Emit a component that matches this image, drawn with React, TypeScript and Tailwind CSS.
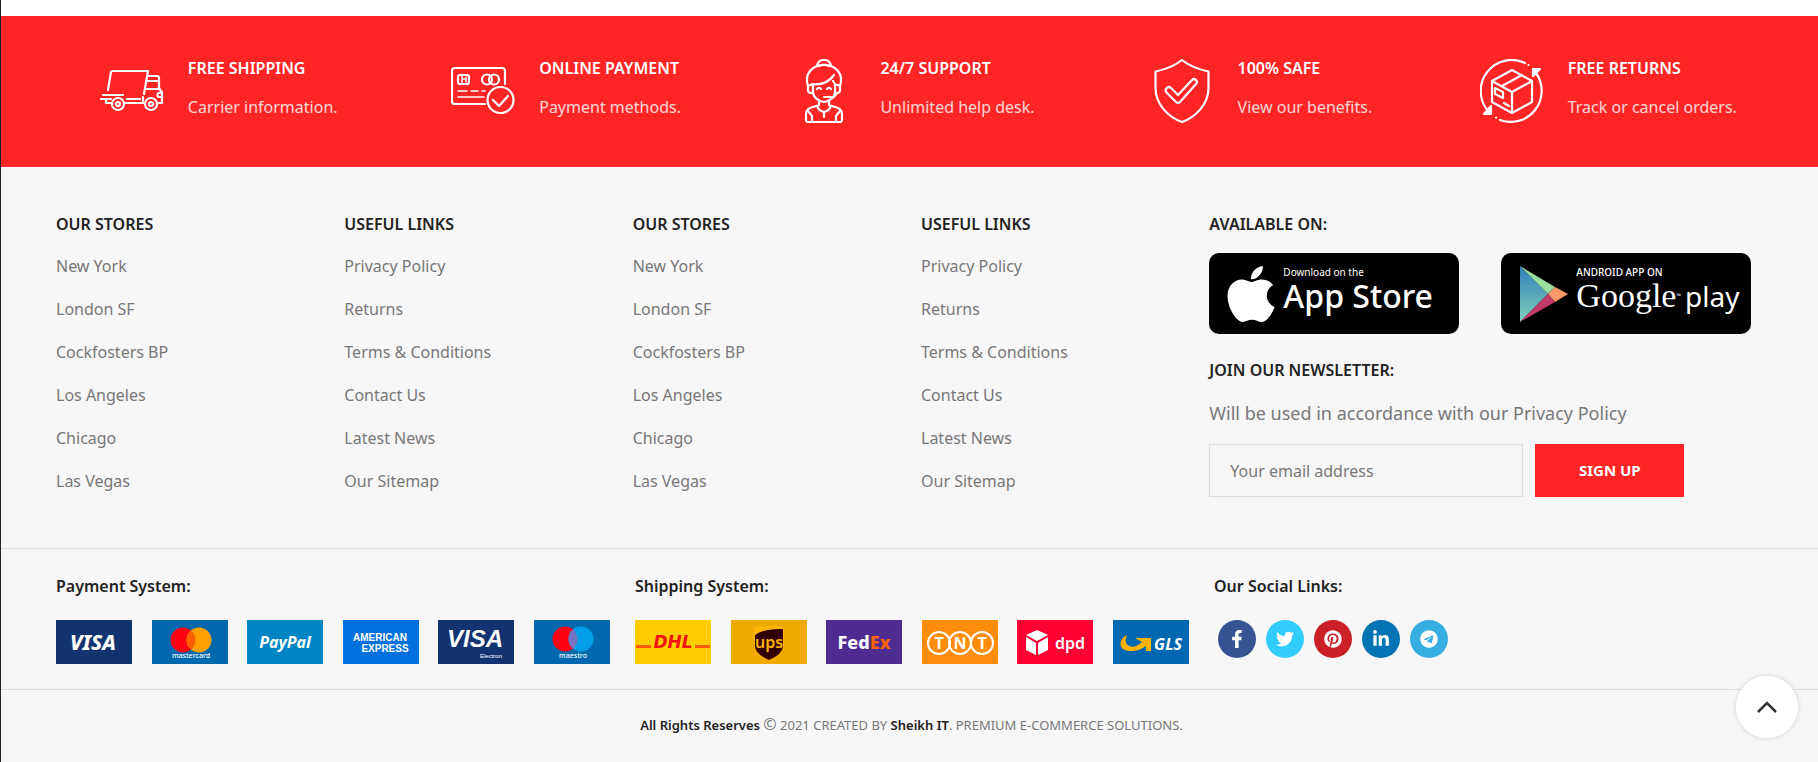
import React from 'react'
import { FaApple, FaFacebookF, FaTwitter, FaPinterest, FaLinkedinIn, FaTelegram } from 'react-icons/fa'

const strokeProps = {
  fill: 'none',
  stroke: 'currentColor',
  strokeWidth: 2.2,
  strokeLinecap: 'round' as const,
  strokeLinejoin: 'round' as const,
}

const TruckIcon = () => (
  <svg viewBox="0 0 64 64" className="size-16 shrink-0" {...strokeProps}>
    <path d="M8 31 11 13q.4-1 1.500-1H48L44 35M43 38v4M3 36h20M1 40h10M6 41v3h6M27 40h13" />
    <path d="M47 17h10q2 0 2 2v11l3 3v11h-3M47 22h12M47 30h13M62 34h-3q-1.500 0-1.500 2t1.500 2h3M24 44h20" />
    <circle cx="18" cy="45" r="6" />
    <circle cx="18" cy="45" r="2" />
    <circle cx="51" cy="45" r="6" />
    <circle cx="51" cy="45" r="2" />
  </svg>
)

const CardIcon = () => (
  <svg viewBox="0 0 64 64" className="size-16 shrink-0" {...strokeProps}>
    <path d="M34 45H4q-3 0-3-3V12q0-3 3-3h47q3 0 3 3v13" />
    <rect x="7" y="16" width="11" height="9" rx="2" />
    <path d="M11 16v9M11 20h4M15 18v5M7 32h9M20 32h7M31 32h3M7 38h26" strokeWidth="1.500" />
    <circle cx="36" cy="20.500" r="5" />
    <circle cx="43" cy="20.500" r="5" />
    <circle cx="49.500" cy="41" r="13" />
    <path d="m42 41 6 6 9-10" />
  </svg>
)

const SupportIcon = () => (
  <svg viewBox="0 0 64 64" className="size-16 shrink-0" {...strokeProps}>
    <path d="M25 7q1-6 7-6t7 6M27 7q5-3 10 0" />
    <path d="M16 27C12 15 20 6 32 6s20 9 16 21" />
    <path d="M20 25q14 2 22-9M21 26v7c0 5 6 10 11 10s11-5 11-10v-8l-2-3" />
    <path d="M20 26h-2q-2 0-2 3v2q0 3 3 3h2M44 26h2q2 0 2 3v2q0 3-3 3l-3 4H32" />
    <path d="M25 30q2-2.500 4 0M35 30q2-2.500 4 0" />
    <path d="M27 41v5l-9 3q-4 2-4 6v6q0 2 2 2h32q2 0 2-2v-6q0-4-4-6l-9-3v-5M25 47q2 5 7 6 5-1 7-6M32 53v5M20 63v-6l-4-5M44 63v-6l4-5" />
  </svg>
)

const ShieldIcon = () => (
  <svg viewBox="0 0 64 64" className="size-16 shrink-0" {...strokeProps}>
    <path d="M32 1q10 8 26.500 11.500V29C58.500 45 46 58 32 63 18 58 5.500 45 5.500 29V12.500Q22 9 32 1Z" />
    <path d="M17 34q-3-3 0-5 2-2 4 0l7 7 14-15q2-2 4 0t0 4L30 43q-2 2-4 0Z" />
  </svg>
)

const ReturnIcon = () => (
  <svg viewBox="0 0 64 64" className="size-16 shrink-0" {...strokeProps}>
    <path d="M45 4A31 31 0 0 0 8 52M20 61A31 31 0 0 0 56 14" />
    <path d="M53 10h7l-7 7ZM11 47v8H4Z" fill="currentColor" />
    <path d="M48.500 6h.1M16 58.500h.1" />
    <path d="m32 11 20 11v21L32 54 12 43V22ZM12 22l20 11 20-11M32 33v21M22 27l20-11" />
    <path d="m15 29 8 4v6l-8-4ZM24 44l5 3" />
  </svg>
)

const features = [
  { title: 'FREE SHIPPING', text: 'Carrier information.', icon: <TruckIcon /> },
  { title: 'ONLINE PAYMENT', text: 'Payment methods.', icon: <CardIcon /> },
  { title: '24/7 SUPPORT', text: 'Unlimited help desk.', icon: <SupportIcon /> },
  { title: '100% SAFE', text: 'View our benefits.', icon: <ShieldIcon /> },
  { title: 'FREE RETURNS', text: 'Track or cancel orders.', icon: <ReturnIcon /> },
]

const stores = {
  title: 'OUR STORES',
  links: ['New York', 'London SF', 'Cockfosters BP', 'Los Angeles', 'Chicago', 'Las Vegas'],
}
const useful = {
  title: 'USEFUL LINKS',
  links: ['Privacy Policy', 'Returns', 'Terms & Conditions', 'Contact Us', 'Latest News', 'Our Sitemap'],
}
const columns = [stores, useful, stores, useful]

const Logo = ({ label, bg, children }: { label: string; bg: string; children: React.ReactNode }) => (
  <li>
    <svg
      viewBox="0 0 76 44"
      role="img"
      aria-label={label}
      className="h-11 w-19"
      fontFamily="'Noto Sans', sans-serif"
      fontWeight="700"
      fill="#fff"
      textAnchor="middle"
    >
      <rect width="76" height="44" fill={bg} />
      {children}
    </svg>
  </li>
)

const PaymentLogos = () => (
  <ul className="flex max-w-[554px] justify-between">
    <Logo label="Visa" bg="#12336f">
      <text x="37" y="30" fontSize="21" fontStyle="italic" fontWeight="800">VISA</text>
    </Logo>
    <Logo label="Mastercard" bg="#0069ad">
      <circle cx="31" cy="20" r="12.500" fill="#ff0015" />
      <circle cx="47" cy="20" r="12.500" fill="#ff9f00" />
      <path d="M39 10.400a12.500 12.500 0 0 1 0 19.200 12.500 12.500 0 0 1 0-19.200Z" fill="#ff5f00" />
      <text x="39" y="38" fontSize="7" fontWeight="500">mastercard</text>
    </Logo>
    <Logo label="PayPal" bg="#0085c3">
      <text x="38" y="28" fontSize="16" fontStyle="italic">PayPal</text>
    </Logo>
    <Logo label="American Express" bg="#0071dc">
      <text x="37" y="21" fontSize="10" fontFamily="'Liberation Sans', sans-serif">AMERICAN</text>
      <text x="42" y="32" fontSize="10" fontFamily="'Liberation Sans', sans-serif">EXPRESS</text>
    </Logo>
    <Logo label="Visa Electron" bg="#12336f">
      <text x="37" y="27" fontSize="24" fontStyle="italic" fontFamily="'Liberation Sans', sans-serif">VISA</text>
      <text x="53" y="38" fontSize="6" fontWeight="400" fontFamily="'Liberation Sans', sans-serif">Electron</text>
    </Logo>
    <Logo label="Maestro" bg="#0069ad">
      <circle cx="31" cy="19" r="12.500" fill="#ff0015" />
      <circle cx="47" cy="19" r="12.500" fill="#009ee8" />
      <path d="M39 9.400a12.500 12.500 0 0 1 0 19.200 12.500 12.500 0 0 1 0-19.200Z" fill="#7673c0" />
      <text x="39" y="38" fontSize="7" fontWeight="500">maestro</text>
    </Logo>
  </ul>
)

const ShippingLogos = () => (
  <ul className="flex max-w-[554px] justify-between">
    <Logo label="DHL" bg="#ffcc00">
      <path d="M1 25h15v3H1ZM60 25h15v3H60Z" fill="#ff5a00" />
      <text x="38" y="28" fontSize="17" fontStyle="italic" fontFamily="'DejaVu Sans', sans-serif" fill="#f01414">DHL</text>
    </Logo>
    <Logo label="UPS" bg="#eeaa00">
      <path d="M23 8q14-5 30 0v18q0 9-15 15-15-6-15-15Z" fill="#ffb500" />
      <path d="M24 15q10-7 28-6v17q0 8-14 14-14-6-14-14Z" fill="#330000" />
      <text x="38" y="28" fontSize="16" fontWeight="600" fill="#ffb500">ups</text>
    </Logo>
    <Logo label="FedEx" bg="#4d2b91">
      <text x="38" y="29" fontSize="18" fontWeight="800">Fed<tspan fill="#ff6200">Ex</tspan></text>
    </Logo>
    <Logo label="TNT" bg="#ff8c0a">
      <g fill="none" stroke="#fff" strokeWidth="2">
        <circle cx="17" cy="23" r="11" />
        <circle cx="38" cy="23" r="11" />
        <circle cx="60" cy="23" r="11" />
      </g>
      <text x="17" y="29" fontSize="16">T</text>
      <text x="38" y="29" fontSize="16">N</text>
      <text x="60" y="29" fontSize="16">T</text>
    </Logo>
    <Logo label="DPD" bg="#ff0032">
      <path d="m20 10 11 5-11 6-11-6ZM9 17l10 6v12L9 30ZM31 17l-10 6v12l10-5Z" />
      <text x="53" y="29" fontSize="16" fontWeight="600">dpd</text>
    </Logo>
    <Logo label="GLS" bg="#0067b1">
      <path d="M14 15C5 19 5 31 17 31c7 0 12-2 16-5v5h5V18H22l7 4c-4 4-9 6-13 4s-4-7-2-11Z" fill="#ffb400" />
      <text x="55" y="30" fontSize="16" fontStyle="italic">GLS</text>
    </Logo>
  </ul>
)

const socials = [
  { name: 'Facebook', Icon: FaFacebookF, color: 'bg-[#365493]' },
  { name: 'Twitter', Icon: FaTwitter, color: 'bg-[#33ccff]' },
  { name: 'Pinterest', Icon: FaPinterest, color: 'bg-[#cb2027]' },
  { name: 'LinkedIn', Icon: FaLinkedinIn, color: 'bg-[#0274b3]' },
  { name: 'Telegram', Icon: FaTelegram, color: 'bg-[#37aee2]' },
]

export default function App() {
  return (
    <div className="min-h-screen border-l border-[#222] bg-[#f7f7f7] pt-4 font-['Noto_Sans',sans-serif] text-base text-[#777] shadow-[inset_0_16px_#fff]">
      <section className="grid grid-cols-5 border-b border-[#f33] bg-[#ff2525] pt-10 pr-9 pb-[43px] pl-11 text-white">
        {features.map((f) => (
          <div key={f.title} className="flex items-end justify-center gap-6">
            {f.icon}
            <div className="space-y-[15px] pb-1">
              <h3 className="leading-6 font-semibold">{f.title}</h3>
              <p className="leading-6 text-white/80">{f.text}</p>
            </div>
          </div>
        ))}
      </section>

      <footer>
        <div className="grid grid-cols-6 pt-[45px] pr-8 pb-[51px] pl-[55px]">
          {columns.map((col, i) => (
            <nav key={i} aria-label={col.title}>
              <h4 className="mb-[18px] leading-6 font-semibold text-[#222]">{col.title}</h4>
              <ul className="space-y-[19px]">
                {col.links.map((link) => (
                  <li key={link} className="leading-6">
                    <a href="#">{link}</a>
                  </li>
                ))}
              </ul>
            </nav>
          ))}

          <div className="col-span-2">
            <h4 className="mb-[17px] leading-6 font-semibold text-[#222]">AVAILABLE ON:</h4>
            <div className="flex gap-[42px]">
              <a href="#" className="flex h-[81px] w-[250px] items-center gap-2 rounded-[10px] bg-black pl-[18px] text-white">
                <FaApple className="h-16 w-12 shrink-0" />
                <span className="block pb-2">
                  <span className="block text-[10px] leading-3">Download on the</span>
                  <span className="block text-[32px] leading-9 font-medium whitespace-nowrap">App Store</span>
                </span>
              </a>
              <a href="#" className="flex h-[81px] w-[250px] items-center gap-2 rounded-[10px] bg-black pl-[19px] text-white">
                <svg viewBox="0 0 48 56" className="h-14 w-12 shrink-0">
                  <defs>
                    <linearGradient id="play" x2="0" y2="1">
                      <stop stopColor="#2f7fb8" />
                      <stop offset="1" stopColor="#7fd0bd" />
                    </linearGradient>
                  </defs>
                  <path d="M0 0v56l28-28Z" fill="url(#play)" />
                  <path d="m0 0 35 21-7 7Z" fill="#9bdca0" />
                  <path d="m35 21 13 7-13 8-7-8Z" fill="#fb9a68" />
                  <path d="m0 56 35-20-7-8Z" fill="#c23a68" />
                </svg>
                <span className="block pb-2">
                  <span className="block text-[10px] leading-3 font-medium">ANDROID APP ON</span>
                  <span className="flex items-baseline text-[28px] leading-9">
                    <span className="font-['Liberation_Serif',serif] text-[34px]">Google</span>
                    <span className="self-center text-[6px] leading-3">™</span>
                    <span className="pl-1">play</span>
                  </span>
                </span>
              </a>
            </div>
            <h4 className="mt-6 mb-[17px] leading-6 font-semibold text-[#222]">JOIN OUR NEWSLETTER:</h4>
            <p className="mb-[17px] text-lg leading-7">Will be used in accordance with our Privacy Policy</p>
            <form className="flex gap-3" onSubmit={(e) => e.preventDefault()}>
              <input
                type="email"
                aria-label="Your email address"
                placeholder="Your email address"
                className="h-[53px] w-[314px] border border-[#ddd] px-5 placeholder:text-[#777]"
              />
              <button type="submit" className="h-[53px] w-[149px] bg-[#ff2525] text-[15px] font-bold text-white">
                SIGN UP
              </button>
            </form>
          </div>
        </div>

        <div className="grid grid-cols-3 border-y border-[#ddd] py-[25px] pr-[25px] pl-[55px]">
          <div>
            <h4 className="mb-[22px] leading-6 font-semibold text-[#222]">Payment System:</h4>
            <PaymentLogos />
          </div>
          <div>
            <h4 className="mb-[22px] leading-6 font-semibold text-[#222]">Shipping System:</h4>
            <ShippingLogos />
          </div>
          <div>
            <h4 className="mb-[22px] leading-6 font-semibold text-[#222]">Our Social Links:</h4>
            <div className="flex gap-[10px] pl-1">
              {socials.map(({ name, Icon, color }) => (
                <a
                  key={name}
                  href="#"
                  aria-label={name}
                  className={`flex size-[38px] items-center justify-center rounded-full text-white ${color}`}
                >
                  <Icon className="size-[18px]" />
                </a>
              ))}
            </div>
          </div>
        </div>

        <p className="py-[22px] pl-1 text-center text-[13px] leading-6">
          <strong className="font-semibold text-[#222]">All Rights Reserves</strong> <span className="text-base">©</span> 2021
          CREATED BY <strong className="font-semibold text-[#222]">Sheikh IT</strong>. PREMIUM E-COMMERCE SOLUTIONS.
        </p>
      </footer>

      <button
        type="button"
        aria-label="Back to top"
        className="fixed right-5 bottom-6 flex size-[62px] items-center justify-center rounded-full bg-white/90 text-[#333] shadow-[0_0_5px_rgba(0,0,0,0.17)]"
      >
        <svg viewBox="0 0 20 12" className="h-3 w-5" fill="none" stroke="currentColor" strokeWidth="2.500">
          <path d="m1 11 9-9 9 9" />
        </svg>
      </button>
    </div>
  )
}
